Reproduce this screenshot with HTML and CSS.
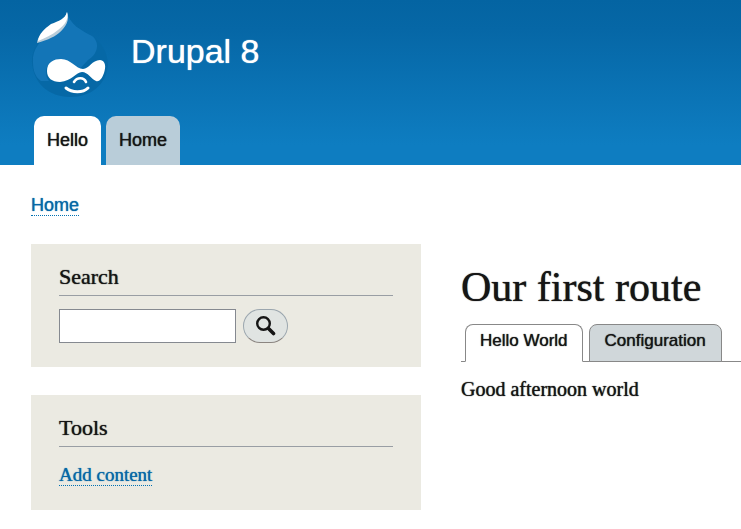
FILE: index.html
```html
<!DOCTYPE html>
<html lang="en">
<head>
<meta charset="utf-8">
<title>Our first route | Drupal 8</title>
<link rel="stylesheet" href="styles.css">
</head>
<body>
<header class="header">
  <div class="branding">
    <svg class="logo" viewBox="0 0 78 88" aria-hidden="true">
      <path fill="#0668a6" d="M36 1C38 13 51 20 61 25C71 32 77 43 77 54C75 74 60 86 39 86C18 86 2 72 1 51C0 38 9 29 18 23C27 18 35 12 36 1Z"/>
      <path fill="#1375b7" d="M36 1C38 13 51 20 61 25C70 32 66 44 57 49C52 54 49 60 43 58C32 53 22 47 16 56C14 61 15 66 18 70H10C4 66 2 59 2 51C1 38 10 29 18 23C27 18 35 12 36 1Z"/>
      <path fill="#b9cdda" d="M36 1C39 9 35 16 28 22C22 27 13 30 6 32C7 25 12 20 19 16C27 12 34 10 36 1Z"/>
      <path fill="#fff" d="M36 1C38 8 34 14 27 19C21 24 14 27 7 30C8 23 13 18 20 13C28 10 34 8 36 1Z"/>
      <path fill="#fff" d="M16 60C16 51 23 48 30 48C40 48 45 58 52 58C58 58 61 49 69 49C75 50 75 56 73 62C71 68 68 71 65 70C60 68 57 61 51 61C45 61 41 70 29 71C21 71 16 67 16 60Z"/>
      <path fill="none" stroke="#fff" stroke-width="2.6" stroke-linecap="round" d="M43 71C46 66 53 66 55 71"/>
      <path fill="none" stroke="#fff" stroke-width="3" stroke-linecap="round" d="M35 77C41 82 52 82 57 77"/>
    </svg>
    <a class="site-name" href="#">Drupal 8</a>
  </div>
  <nav class="menu" aria-label="Main">
    <a class="menu-link is-active" href="#">Hello</a>
    <a class="menu-link" href="#">Home</a>
  </nav>
</header>
<nav class="breadcrumb" aria-label="Breadcrumb"><a class="text-link" href="#">Home</a></nav>
<div class="layout">
  <aside class="sidebar">
    <section class="block">
      <h2 class="block-title">Search</h2>
      <form class="search">
        <input class="search-input" type="search" aria-label="Search">
        <button class="search-button" type="button" aria-label="Submit search">
          <svg class="search-icon" viewBox="0 0 20 20" aria-hidden="true">
            <circle cx="7.5" cy="7.5" r="6.3" fill="none" stroke="#151515" stroke-width="2.4"/>
            <path d="M12.5 12.5L17.5 17.5" stroke="#151515" stroke-width="3.6" stroke-linecap="round"/>
          </svg>
        </button>
      </form>
    </section>
    <section class="block">
      <h2 class="block-title">Tools</h2>
      <a class="text-link tool-link" href="#">Add content</a>
    </section>
  </aside>
  <main class="content">
    <h1 class="page-title">Our first route</h1>
    <nav class="tabs" aria-label="Tabs">
      <a class="tab is-active" href="#">Hello World</a>
      <a class="tab" href="#">Configuration</a>
    </nav>
    <p class="body-text">Good afternoon world</p>
  </main>
</div>
</body>
</html>
```
FILE: styles.css
```css
* {
  box-sizing: border-box;
}

body {
  margin: 0;
  background: #fff;
  color: #151515;
  font-family: Georgia, "Liberation Serif", serif;
  text-shadow: 0 0 1px currentColor;
}

a {
  color: inherit;
  text-decoration: none;
}

.header {
  padding: 11px 31px 0;
  background: linear-gradient(#0464a2 0, #0667a6 18%, #0e7dc1 88%);
  font-family: "Liberation Sans", sans-serif;
}

.branding {
  display: flex;
  align-items: flex-start;
  gap: 22px;
  height: 105px;
}

.logo {
  width: 78px;
  height: 88px;
}

.site-name {
  padding-top: 20px;
  color: #fff;
  font-size: 34px;
  line-height: 40px;
}

.menu {
  display: flex;
  gap: 5px;
  padding-left: 3px;
}

.menu-link {
  padding: 0 13px;
  border-radius: 10px 10px 0 0;
  background: #b9cdd9;
  font-size: 18px;
  line-height: 49px;
}

.menu-link.is-active {
  background: #fff;
}

.breadcrumb {
  padding: 30px 31px 28px;
  font-family: "Liberation Sans", sans-serif;
  font-size: 18px;
  line-height: 21px;
}

.text-link {
  display: inline-block;
  border-bottom: 1px dotted #0071b3;
  color: #0668a6;
}

.breadcrumb .text-link {
  line-height: 20px;
}

.layout {
  display: grid;
  grid-template-columns: 39fr 28fr;
  gap: 40px;
  padding-left: 31px;
}

.sidebar {
  display: grid;
  align-content: start;
  gap: 28px;
}

.block {
  padding: 20px 28px 24px;
  background: #ebeae2;
}

.block-title {
  margin: 0 0 13px;
  padding-bottom: 5px;
  border-bottom: 1px solid #999ea4;
  font-size: 22px;
  font-weight: 400;
  line-height: 26px;
}

.search {
  display: flex;
  gap: 7px;
}

.search-input {
  width: 177px;
  height: 34px;
  padding: 4px;
  border: 1px solid #858990;
  background: #fff;
  font: inherit;
}

.search-button {
  display: flex;
  align-items: center;
  justify-content: center;
  width: 45px;
  height: 34px;
  padding: 0;
  border: 1px solid #9ba6ae;
  border-bottom-color: #8b8581;
  border-radius: 17px;
  background: #e0e4e2;
}

.search-icon {
  width: 20px;
  height: 20px;
}

.tool-link {
  margin-top: 5px;
  font-size: 19px;
  line-height: 20px;
}

.page-title {
  margin: 19px 0 13px;
  font-size: 42px;
  font-weight: 400;
  line-height: 48px;
}

.tabs {
  display: flex;
  gap: 6px;
  padding-left: 4px;
  font-family: "Liberation Sans", sans-serif;
  font-size: 17px;
  line-height: 32px;
  box-shadow: inset 0 -1px #888;
}

.tab {
  height: 38px;
  padding: 0 15px;
  border: 1px solid #888;
  border-radius: 8px 8px 0 0;
  background: #d0d7da;
}

.tab.is-active {
  padding: 0 14px;
  border-bottom-color: #fff;
  background: #fff;
}

.body-text {
  margin: 15px 0 0;
  font-size: 20px;
  line-height: 24px;
}
```
